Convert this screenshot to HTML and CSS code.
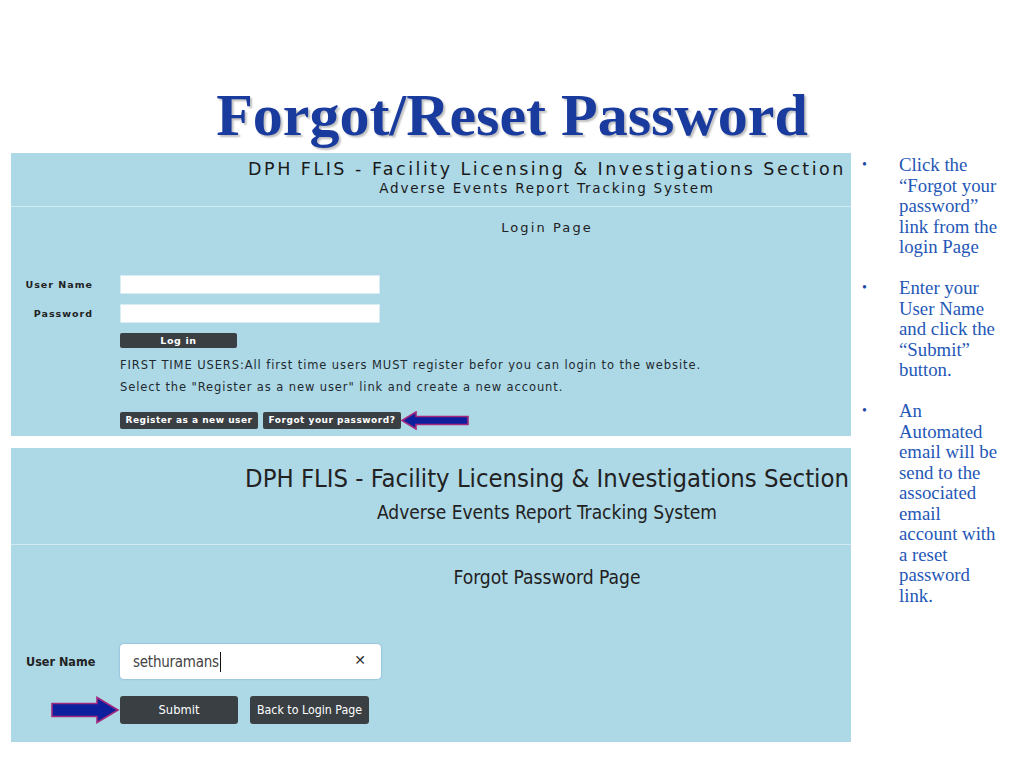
FILE: index.html
```html
<!DOCTYPE html>
<html>
<head>
<meta charset="utf-8">
<title>Forgot/Reset Password</title>
<link rel="stylesheet" href="styles.css">
</head>
<body>
<div class="slide">
  <h1 class="title">Forgot/Reset Password</h1>
  <div class="main">
    <div class="shots">
      <section class="panel p1">
        <div class="hdr">
          <div class="h-l1">DPH FLIS - Facility Licensing &amp; Investigations Section</div>
          <div class="h-l2">Adverse Events Report Tracking System</div>
        </div>
        <div class="pagename">Login Page</div>
        <div class="row r-user">
          <div class="lbl">User Name</div>
          <div class="inp"></div>
        </div>
        <div class="row r-pass">
          <div class="lbl">Password</div>
          <div class="inp"></div>
        </div>
        <div class="row r-login">
          <div class="lbl"></div>
          <div class="btn btn-login">Log in</div>
        </div>
        <div class="row r-txt1">
          <div class="lbl"></div>
          <div class="note">FIRST TIME USERS:All first time users MUST register befor you can login to the website.</div>
        </div>
        <div class="row r-txt2">
          <div class="lbl"></div>
          <div class="note">Select the "Register as a new user" link and create a new account.</div>
        </div>
        <div class="row r-btns">
          <div class="lbl"></div>
          <div class="btn btn-sm">Register as a new user</div>
          <div class="btn btn-sm btn-forgot">Forgot your password?</div>
          <svg class="arrow-l" width="70" height="19" viewBox="0 0 70 19">
            <polygon points="2,9.5 16,1 16,5.5 68,5.5 68,13.5 16,13.5 16,18" fill="#0d1f9c" stroke="#a3287e" stroke-width="1.6" stroke-linejoin="miter"/>
          </svg>
        </div>
      </section>
      <section class="panel p2">
        <div class="hdr">
          <div class="h-l1">DPH FLIS - Facility Licensing &amp; Investigations Section</div>
          <div class="h-l2">Adverse Events Report Tracking System</div>
        </div>
        <div class="pagename">Forgot Password Page</div>
        <div class="row r-user2">
          <div class="lbl">User Name</div>
          <div class="inp2">
            <span class="val">sethuramans</span><span class="caret"></span>
            <span class="clear">✕</span>
          </div>
        </div>
        <div class="row r-btns2">
          <div class="lbl lbl-arrow">
            <svg width="70" height="28" viewBox="0 0 70 28">
              <polygon points="2,7.5 47,7.5 47,1.5 68,14 47,26.5 47,20.5 2,20.5" fill="#0d1f9c" stroke="#a3287e" stroke-width="1.6"/>
            </svg>
          </div>
          <div class="btn btn-lg">Submit</div>
          <div class="btn btn-lg btn-back">Back to Login Page</div>
        </div>
      </section>
    </div>
    <ul class="notes">
      <li>Click the<br>“Forgot your<br>password”<br>link from the<br>login Page</li>
      <li>Enter your<br>User Name<br>and click the<br>“Submit”<br>button.</li>
      <li>An<br>Automated<br>email will be<br>send to the<br>associated<br>email<br>account with<br>a reset<br>password<br>link.</li>
    </ul>
  </div>
</div>
</body>
</html>
```

FILE: styles.css
```css
html, body {
  margin: 0;
  padding: 0;
  background: #ffffff;
}

.slide {
  width: 1024px;
  height: 768px;
  overflow: hidden;
}

.title {
  margin: 0;
  padding-top: 80px;
  height: 70px;
  line-height: 70px;
  margin-bottom: 3px;
  text-align: center;
  font-family: "Liberation Serif", "Times New Roman", serif;
  font-weight: bold;
  font-size: 60px;
  color: #1a3b9e;
  text-shadow: 2px 2px 2px rgba(0, 0, 0, 0.25);
}

.main {
  display: flex;
  padding-left: 11px;
}

.shots {
  width: 840px;
  display: flex;
  flex-direction: column;
  gap: 12px;
}

.panel {
  background: #add8e6;
  color: #222;
}

/* ---------- panel 1 ---------- */
.p1 {
  height: 283px;
  font-family: "DejaVu Sans", Verdana, sans-serif;
}

.hdr {
  padding-left: 232px;
  text-align: center;
  border-bottom: 1px solid #d2ebf2;
}

.p1 .hdr {
  padding-top: 6px;
  padding-bottom: 9px;
}

.p1 .h-l1 {
  font-size: 17.5px;
  line-height: 20px;
  letter-spacing: 2.5px;
  white-space: nowrap;
  color: #1a1a1a;
}

.p1 .h-l2 {
  font-size: 13.5px;
  line-height: 18px;
  letter-spacing: 1.8px;
  color: #1a1a1a;
}

.pagename {
  padding-left: 232px;
  text-align: center;
}

.p1 .pagename {
  margin-top: 13px;
  font-size: 13px;
  line-height: 16px;
  letter-spacing: 2.1px;
}

.row {
  display: flex;
  align-items: center;
}

.lbl {
  width: 82px;
  flex: none;
  margin-right: 27px;
  text-align: right;
  font-weight: bold;
  white-space: nowrap;
}

.p1 .lbl {
  font-size: 9.5px;
  letter-spacing: 1px;
}

.r-user { margin-top: 39px; }
.r-pass { margin-top: 10px; }
.r-login { margin-top: 10px; }
.r-txt1 { margin-top: 9px; }
.r-txt2 { margin-top: 6px; }
.r-btns { margin-top: 16px; }

.inp {
  width: 260px;
  height: 19px;
  background: #ffffff;
  border-radius: 2px;
  box-shadow: inset 0 0 0 1px #d9eef4;
}

.btn {
  background: #3a3f44;
  color: #ffffff;
  text-align: center;
  border-radius: 2px;
  white-space: nowrap;
}

.btn-login {
  width: 117px;
  height: 15px;
  line-height: 15px;
  font-size: 9.5px;
  font-weight: bold;
  letter-spacing: 0.6px;
}

.note {
  font-size: 11.5px;
  line-height: 16px;
  letter-spacing: 0.9px;
  white-space: nowrap;
  color: #1e2a30;
}

.btn-sm {
  width: 138px;
  height: 17px;
  line-height: 17px;
  font-size: 9px;
  font-weight: bold;
  letter-spacing: 0.5px;
}

.btn-forgot {
  margin-left: 5px;
}

.arrow-l {
  display: block;
  margin-left: -1px;
}

/* ---------- panel 2 ---------- */
.p2 {
  height: 294px;
  font-family: "DejaVu Sans Condensed", Tahoma, sans-serif;
}

.p2 .hdr {
  padding-top: 15px;
  padding-bottom: 19px;
}

.p2 .h-l1 {
  font-size: 25.4px;
  line-height: 30px;
  white-space: nowrap;
}

.p2 .h-l2 {
  margin-top: 6px;
  font-size: 19px;
  line-height: 26px;
}

.p2 .pagename {
  margin-top: 20px;
  font-size: 19.1px;
  line-height: 26px;
}

.p2 .lbl {
  font-size: 12.5px;
  text-align: left;
  padding-left: 15px;
  width: 67px;
}

.r-user2 { margin-top: 53px; }
.r-btns2 { margin-top: 17px; }

.inp2 {
  position: relative;
  width: 261px;
  height: 35px;
  box-sizing: border-box;
  background: #ffffff;
  border-radius: 4px;
  box-shadow: 0 0 2px rgba(80, 140, 200, 0.7);
  display: flex;
  align-items: center;
  padding-left: 13px;
}

.val {
  font-size: 15px;
  letter-spacing: -0.25px;
  color: #444;
}

.caret {
  display: inline-block;
  width: 1px;
  height: 20px;
  background: #111;
  margin-left: 1px;
}

.clear {
  position: absolute;
  right: 15px;
  top: 8px;
  font-family: "DejaVu Sans", sans-serif;
  font-size: 14px;
  color: #333;
}

.p2 .lbl-arrow {
  display: flex;
  justify-content: flex-end;
  padding-left: 0;
  width: 82px;
  margin-right: 27px;
}

.lbl-arrow svg {
  display: block;
  margin-right: -27px;
}

.btn-lg {
  width: 118px;
  height: 28px;
  line-height: 28px;
  font-size: 12.8px;
  border-radius: 3px;
}

.btn-back {
  margin-left: 12px;
  width: 119px;
  font-size: 12.3px;
}

/* ---------- notes ---------- */
.notes {
  list-style: none;
  margin: 0;
  padding: 0;
  margin-left: 11px;
  margin-top: 2px;
  font-family: "Liberation Serif", "Times New Roman", serif;
  font-size: 18.8px;
  line-height: 20.5px;
  color: #2457b6;
  white-space: nowrap;
}

.notes li {
  position: relative;
  padding-left: 37px;
  margin-bottom: 20.5px;
}

.notes li::before {
  content: "•";
  position: absolute;
  left: 0;
  top: 0;
  font-size: 14px;
  color: #1f4aa6;
}
```
